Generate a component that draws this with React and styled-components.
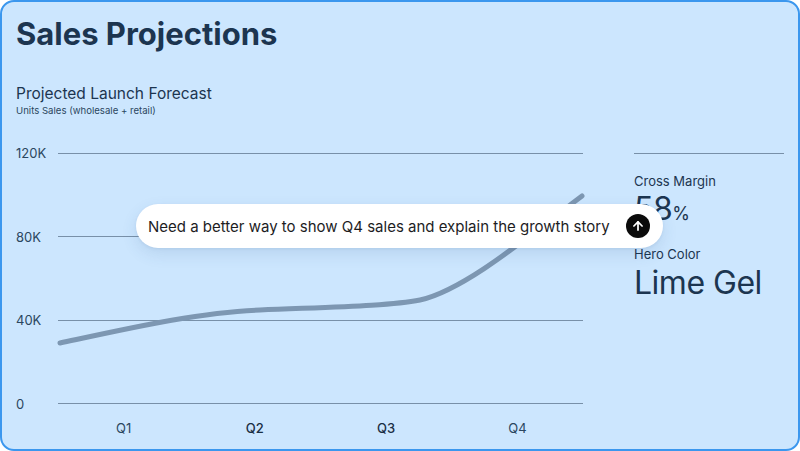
import React from 'react';
import styled, { createGlobalStyle } from 'styled-components';

const GlobalStyle = createGlobalStyle`
  html, body {
    margin: 0;
    padding: 0;
    background: #ffffff;
  }
  * {
    box-sizing: border-box;
  }
`;

const Card = styled.div`
  position: relative;
  width: 800px;
  height: 451px;
  padding: 14px 14px 0 14px;
  background: #cce6fe;
  border: 2px solid #3b97ee;
  border-radius: 14px;
  overflow: hidden;
  font-family: Inter, 'Liberation Sans', sans-serif;
  color: #1c3550;
`;

const Title = styled.h1`
  margin: 0;
  font-size: 31px;
  line-height: 36px;
  font-weight: 700;
  letter-spacing: 0;
  color: #1c3550;
`;

const ChartTitle = styled.h2`
  margin: 32px 0 0 0;
  font-size: 15.5px;
  line-height: 20px;
  font-weight: 400;
  color: #1c3550;
`;

const ChartSubtitle = styled.div`
  font-size: 9.6px;
  line-height: 13px;
  color: #2b4660;
`;

const Body = styled.div`
  display: grid;
  grid-template-columns: 567px 1fr;
  column-gap: 51px;
  margin-top: 26px;
`;

const Chart = styled.div`
  display: flex;
  flex-direction: column;
`;

const Plot = styled.div`
  position: relative;
  height: 271px;
  display: flex;
  flex-direction: column;
  justify-content: space-between;
`;

const GridRow = styled.div`
  display: flex;
  align-items: center;
  height: 20px;
`;

const AxisLabel = styled.span`
  width: 42px;
  font-size: 13px;
  color: #2b4660;
`;

const GridLine = styled.div`
  flex: 1;
  height: 1px;
  background: #7890a8;
`;

const LineLayer = styled.svg`
  position: absolute;
  left: 42px;
  right: 0;
  top: 10px;
  bottom: 10px;
  width: 525px;
  height: 251px;
  overflow: visible;
`;

const XAxis = styled.div`
  display: grid;
  grid-template-columns: repeat(4, 1fr);
  margin-left: 42px;
  margin-top: 6px;
`;

const XLabel = styled.span`
  text-align: center;
  font-size: 13px;
  line-height: 16px;
  color: ${(p) => (p.$strong ? '#1a2e44' : '#2b4660')};
  font-weight: ${(p) => (p.$strong ? 500 : 400)};
`;

const Side = styled.div`
  display: flex;
  flex-direction: column;
  padding-top: 10px;
`;

const Divider = styled.div`
  height: 1px;
  background: #7890a8;
`;

const StatLabel = styled.div`
  margin-top: ${(p) => p.$gap}px;
  font-size: 13px;
  line-height: 16px;
  color: #1c3550;
`;

const StatValue = styled.div`
  margin-top: ${(p) => p.$gap}px;
  font-size: 32px;
  line-height: 36px;
  font-weight: 400;
  letter-spacing: -0.5px;
  color: #1c3550;
`;

const Unit = styled.span`
  font-size: 18px;
  letter-spacing: 0;
`;

const Bubble = styled.div`
  position: absolute;
  left: 134px;
  top: 202px;
  width: 527px;
  height: 44px;
  display: flex;
  align-items: center;
  justify-content: space-between;
  padding: 0 13px 0 12px;
  background: #ffffff;
  border-radius: 22px;
  box-shadow: 0 6px 16px rgba(40, 80, 130, 0.12), 0 1px 3px rgba(40, 80, 130, 0.08);
`;

const BubbleText = styled.span`
  font-family: Inter, 'Liberation Sans', sans-serif;
  font-size: 15px;
  color: #1d1d1f;
  white-space: nowrap;
`;

const SendButton = styled.button`
  width: 24px;
  height: 24px;
  border: none;
  border-radius: 50%;
  background: #0b0b0b;
  display: flex;
  align-items: center;
  justify-content: center;
  padding: 0;
`;

const yLabels = ['120K', '80K', '40K', '0'];
const quarters = [
  { q: 'Q1', strong: false },
  { q: 'Q2', strong: true },
  { q: 'Q3', strong: true },
  { q: 'Q4', strong: false },
];

const App = () => {
  return (
    <>
      <GlobalStyle />
      <Card>
        <Title>Sales Projections</Title>
        <ChartTitle>Projected Launch Forecast</ChartTitle>
        <ChartSubtitle>Units Sales (wholesale + retail)</ChartSubtitle>

        <Body>
          <Chart>
            <Plot>
              {yLabels.map((l) => (
                <GridRow key={l}>
                  <AxisLabel>{l}</AxisLabel>
                  <GridLine />
                </GridRow>
              ))}
              {/* curva de proyección */}
              <LineLayer viewBox="58 153 525 251" preserveAspectRatio="none">
                <path
                  d="M60,343 C130,328 200,312 260,310 C330,307 390,306 420,300 C465,290 530,235 582,196"
                  fill="none"
                  stroke="#7d97b2"
                  strokeWidth="5"
                  strokeLinecap="round"
                />
              </LineLayer>
            </Plot>
            <XAxis>
              {quarters.map((x) => (
                <XLabel key={x.q} $strong={x.strong}>{x.q}</XLabel>
              ))}
            </XAxis>
          </Chart>

          <Side>
            <Divider />
            <StatLabel $gap={19}>Cross Margin</StatLabel>
            <StatValue $gap={2}>
              58<Unit>%</Unit>
            </StatValue>
            <StatLabel $gap={14}>Hero Color</StatLabel>
            <StatValue $gap={3}>Lime Gel</StatValue>
          </Side>
        </Body>

        <Bubble>
          <BubbleText>Need a better way to show Q4 sales and explain the growth story</BubbleText>
          <SendButton aria-label="send">
            <svg width="14" height="14" viewBox="0 0 24 24" fill="none" stroke="#fff" strokeWidth="3" strokeLinecap="round" strokeLinejoin="round">
              <path d="M12 19V5" />
              <path d="M5 12l7-7 7 7" />
            </svg>
          </SendButton>
        </Bubble>
      </Card>
    </>
  );
};

export default App;
